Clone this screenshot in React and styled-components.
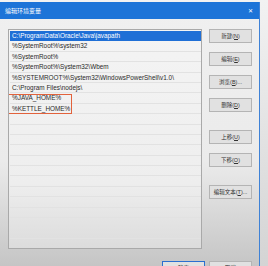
import React from "react"
import styled, { createGlobalStyle } from "styled-components"

const paths = [
  "C:\\ProgramData\\Oracle\\Java\\javapath",
  "%SystemRoot%\\system32",
  "%SystemRoot%",
  "%SystemRoot%\\System32\\Wbem",
  "%SYSTEMROOT%\\System32\\WindowsPowerShell\\v1.0\\",
  "C:\\Program Files\\nodejs\\",
  "%JAVA_HOME%",
  "%KETTLE_HOME%",
]

const sideButtons = [
  { label: "新建", key: "N" },
  { label: "编辑", key: "E" },
  { label: "浏览", key: "B", dots: true },
  { label: "删除", key: "D", space: true },
  { label: "上移", key: "U" },
  { label: "下移", key: "O", space: true },
  { label: "编辑文本", key: "T", dots: true },
]

const App = () => {
  const rows = [...paths, ...Array(13).fill("")]
  return (
    <>
      <GlobalStyle />
      <Screen>
        <Window>
          <TitleBar>
            <Title>编辑环境变量</Title>
            <Close>✕</Close>
          </TitleBar>
          <Content>
            <ListBox>
              {rows.map((p, i) => (
                <Row key={i} selected={i === 0}>{p}</Row>
              ))}
              <Highlight />
            </ListBox>
            <SideColumn>
              {sideButtons.map(b => (
                <Button key={b.label} space={b.space}>
                  {b.label}(<u>{b.key}</u>){b.dots ? "..." : ""}
                </Button>
              ))}
            </SideColumn>
          </Content>
          <Footer>
            <Button primary>确定</Button>
            <Button>取消</Button>
          </Footer>
        </Window>
      </Screen>
    </>
  )
}

export default App

const GlobalStyle = createGlobalStyle`
  body {
    margin: 0;
    background: #ededed;
    font-family: "Liberation Sans", "Noto Sans CJK SC", sans-serif;
  }
`

const Screen = styled.div`
  width: 268px;
  height: 266px;
  overflow: hidden;
  display: flex;
  align-items: flex-start;
  background: linear-gradient(#f2f2f2, #d4d4d4);
`

const Window = styled.div`
  width: 259px;
  height: 290px;
  flex-shrink: 0;
  margin-top: 2px;
  border-right: 1px solid #3f82d6;
  display: flex;
  flex-direction: column;
  background: linear-gradient(#f0f0f0 0%, #ebebeb 55%, #c4c4c4 92%);
`

const TitleBar = styled.div`
  height: 17px;
  flex-shrink: 0;
  background: #1d74d8;
  display: flex;
  align-items: center;
  justify-content: space-between;
  padding: 0 6px 0 5px;
  color: #ffffff;
`

const Title = styled.span`
  font-size: 6px;
`

const Close = styled.span`
  font-size: 6px;
  font-family: "DejaVu Sans", sans-serif;
`

const Content = styled.div`
  display: flex;
  flex-shrink: 0;
  gap: 7px;
  padding: 10px 7px 0 8px;
`

const ListBox = styled.div`
  position: relative;
  width: 192px;
  height: 217px;
  padding: 1px 0 0 1px;
  border: 1px solid #a9a9a9;
  background: linear-gradient(#f4f4f4 0%, #eeeeee 70%, #dcdcdc 100%);
  overflow: hidden;
`

const Row = styled.div`
  height: 10.4px;
  line-height: 10px;
  padding-left: 2px;
  font-size: 6.4px;
  white-space: nowrap;
  color: ${p => (p.selected ? "#ffffff" : "#2a2a2a")};
  background: ${p => (p.selected ? "#1f6fd6" : "transparent")};
  border-bottom: 0.6px solid ${p => (p.selected ? "#1f6fd6" : "#e2e2e2")};
  box-sizing: border-box;
`

const Highlight = styled.div`
  position: absolute;
  left: -2px;
  top: 64px;
  width: 63px;
  height: 18px;
  border: 1.5px solid #e2623c;
`

const SideColumn = styled.div`
  display: flex;
  flex-direction: column;
  gap: 9px;
`

const Button = styled.div`
  width: 41px;
  height: 12px;
  flex-shrink: 0;
  display: flex;
  align-items: center;
  justify-content: center;
  font-size: 5.5px;
  color: #333333;
  background: #e1e1e1;
  border: 1px solid ${p => (p.primary ? "#2a6fd0" : "#b4b4b4")};
  margin-bottom: ${p => (p.space ? "9px" : "0")};
  u {
    text-decoration: underline;
  }
`

const Footer = styled.div`
  display: flex;
  flex-shrink: 0;
  justify-content: flex-end;
  gap: 4px;
  padding: 12px 7px 0 0;
`
